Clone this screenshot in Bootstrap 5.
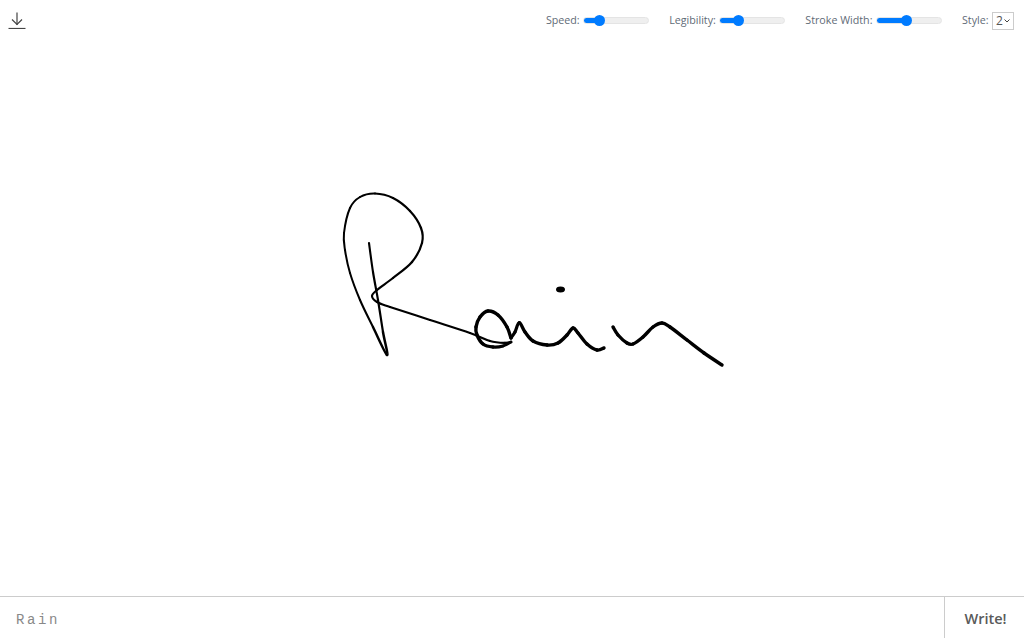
<!DOCTYPE html>
<html lang="en">
<head>
    <meta charset="UTF-8">
    <meta name="viewport" content="width=device-width, initial-scale=1.0">
    <title>Handwriting</title>
    <link href="https://cdn.jsdelivr.net/npm/bootstrap@5.3.3/dist/css/bootstrap.min.css" rel="stylesheet">
    <script src="https://cdn.jsdelivr.net/npm/bootstrap@5.3.3/dist/js/bootstrap.bundle.min.js"></script>
    <style>
        html, body { height: 100%; }
        body { font-family: "Open Sans", sans-serif; overflow: hidden; background: #fff; }
        .top-bar { height: 40px; padding: 0 10px 0 8px; }
        .download-btn { width: 18px; height: 18px; padding: 0; border: 0; background: none; display: block; }
        .download-btn svg { display: block; }
        .control-item { font-size: 10.7px; color: #5f6b77; gap: 3.5px; margin-left: 20px; line-height: 1; }
        .range-input {
            -webkit-appearance: none; appearance: none; flex: 0 0 66px;
            width: 66px; height: 7px; margin: 2px 0 0; padding: 0;
            border: 1px solid #e4e4e4; border-radius: 4px;
            background: linear-gradient(to right, #007bff var(--fill), #efefef var(--fill));
        }
        .range-input::-webkit-slider-thumb {
            -webkit-appearance: none; appearance: none;
            width: 11px; height: 11px; border-radius: 50%; background: #007bff; border: 0;
        }
        .style-select {
            -webkit-appearance: none; appearance: none;
            width: 22px; height: 18px; margin-top: 2px; padding: 0 0 0 3px;
            font-size: 12px; color: #555; border: 1px solid #ccc; border-radius: 0;
            background: #fff url("data:image/svg+xml,%3Csvg xmlns='http://www.w3.org/2000/svg' viewBox='0 0 6 4'%3E%3Cpath d='M.5.5 3 3 5.500.5' fill='none' stroke='%23444' stroke-width='1'/%3E%3C/svg%3E") no-repeat right 3px center / 6px 4px;
        }
        .canvas-area { min-height: 0; }
        .canvas-area svg { display: block; }
        .bottom-bar { height: 42px; border-top: 1px solid #ccc; }
        .text-entry {
            border: 0; outline: 0; padding: 6px 15px 0 16px; min-width: 0;
            font-family: "Liberation Mono", monospace; font-size: 14px; letter-spacing: 2.6px; color: #888;
        }
        .write-btn {
            width: 80px; border: 0; border-left: 1px solid #ccc; background: #fff; padding: 2px 0 0 2px;
            font-size: 14.5px; font-weight: 600; color: #5a5a5a;
        }
    </style>
</head>
<body class="d-flex flex-column">
    <div class="top-bar d-flex align-items-center justify-content-between">
        <button class="download-btn" type="button" aria-label="Download">
            <svg width="18" height="18" viewBox="0 0 18 18" fill="none" stroke="#444" stroke-width="1.200">
                <path d="M9 1.500V14"/><path d="M4 8.500 9 13.500l5-5"/><path d="M.5 17.500h17"/>
            </svg>
        </button>
        <div class="d-flex align-items-center">
            <label class="control-item d-flex align-items-center"><span>Speed:</span>
                <input class="range-input" type="range" min="0" max="100" value="19" style="--fill: 25%"></label>
            <label class="control-item d-flex align-items-center"><span>Legibility:</span>
                <input class="range-input" type="range" min="0" max="100" value="24" style="--fill: 29%"></label>
            <label class="control-item d-flex align-items-center"><span>Stroke Width:</span>
                <input class="range-input" type="range" min="0" max="100" value="46" style="--fill: 47%"></label>
            <label class="control-item d-flex align-items-center"><span>Style:</span>
                <select class="style-select"><option>1</option><option selected>2</option><option>3</option></select></label>
        </div>
    </div>

    <div class="canvas-area flex-grow-1">
        <svg id="sig" width="1024" height="556" viewBox="0 40 1024 556"></svg>
    </div>

    <div class="bottom-bar d-flex">
        <input class="text-entry flex-grow-1" type="text" value="Rain">
        <button class="write-btn" type="button">Write!</button>
    </div>

    <script>
        // pen strokes: x, y, width
        const strokes = [
            [[369,243,2],[373,272,2.2],[378,300,2.2],[383,332,2.2],[387,355,2.8],[373,327,2.1],[360,300,2],[350,273,2],[345,250,2],[344,233,2],
             [350,208,2],[360,197,2],[375,193.500,2],[393,198,2.1],[410,211,2.2],[421,228,2.2],[422,243,2.2],[412,262,2.2],[393,278,2.2],[377,290,2.2],
             [372,296,2.1],[377,302,2.1],[390,307,2.1],[430,320,2.100],[470,333,2.100],[490,341,2.2],[505,343,2.400],[511,342,2.600]],
            [[511,342,2.600],[503,346,3],[493,347,3.400],[483,344,3.400],[477,335,3.400],[476,327,3.400],[480,317,3.400],[488,311,3.400],[498,315,3.400],[507,327,3.400],[511,338,3.400]],
            [[511,338,3.200],[515,332,3.200],[519.300,322.700,3.200],[525,332,3.400],[533,341,3.400],[547,345,3.400],[558,343,3.400],[567,335,3.400],[573,328,3.400],[578,333,3.400],[587,344,3.400],[597,350,3.400],[604,348,3.400]],
            [[613,327,3.400],[618,335,3.400],[627,343,3.400],[633,344,3.400],[643,337,3.400],[653,327,3.400],[662,323,3.400],[670,327,3.400],[687,340,3.400],[704,353,3.400],[722,365,3.400]]
        ];
        const svg = document.getElementById('sig');
        const ns = 'http://www.w3.org/2000/svg';
        strokes.forEach(function(pts) {
            for (let i = 0; i < pts.length - 1; i++) {
                const p0 = pts[Math.max(i - 1, 0)], p1 = pts[i], p2 = pts[i + 1], p3 = pts[Math.min(i + 2, pts.length - 1)];
                const path = document.createElementNS(ns, 'path');
                const c1x = p1[0] + (p2[0] - p0[0]) / 6, c1y = p1[1] + (p2[1] - p0[1]) / 6;
                const c2x = p2[0] - (p3[0] - p1[0]) / 6, c2y = p2[1] - (p3[1] - p1[1]) / 6;
                path.setAttribute('d', `M${p1[0]} ${p1[1]}C${c1x} ${c1y} ${c2x} ${c2y} ${p2[0]} ${p2[1]}`);
                path.setAttribute('fill', 'none');
                path.setAttribute('stroke', '#000');
                path.setAttribute('stroke-linecap', 'round');
                path.setAttribute('stroke-width', (p1[2] + p2[2]) / 2);
                svg.appendChild(path);
            }
        });
        const dot = document.createElementNS(ns, 'ellipse');
        dot.setAttribute('cx', 560.5); dot.setAttribute('cy', 289.5);
        dot.setAttribute('rx', 4.5); dot.setAttribute('ry', 3);
        svg.appendChild(dot);
    </script>
</body>
</html>
